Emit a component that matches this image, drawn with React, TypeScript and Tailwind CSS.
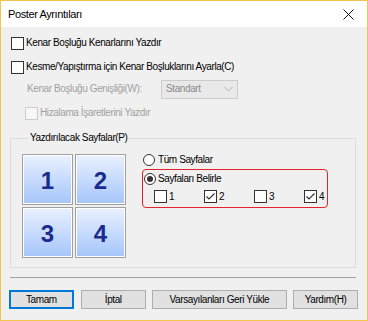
import React from "react";

function Box({ checked = false, disabled = false }: { checked?: boolean; disabled?: boolean }) {
  return (
    <span
      className={`flex h-[13px] w-[13px] shrink-0 items-center justify-center border ${
        disabled ? "border-[#cccccc] bg-[#f7f7f7]" : "border-[#333333] bg-white"
      }`}
    >
      {checked && (
        <svg width="11" height="11" viewBox="0 0 11 11">
          <path d="M1.5 5.5 L4 8 L9.5 2.5" fill="none" stroke="#333" strokeWidth="1.2" />
        </svg>
      )}
    </span>
  );
}

function Radio({ on = false }: { on?: boolean }) {
  return (
    <span className="flex h-[12px] w-[12px] shrink-0 items-center justify-center rounded-full border border-[#333333] bg-white">
      {on && <span className="h-[6px] w-[6px] rounded-full bg-[#333333]" />}
    </span>
  );
}

function Tile({ n }: { n: string }) {
  return (
    <div className="border border-[#a0a0a0] bg-white p-px">
      <div className="flex h-[47px] w-[47px] items-center justify-center bg-gradient-to-b from-[#e8f0ff] to-[#a6c6fa] pt-[2px] text-[24px] font-bold leading-none tracking-normal text-[#1b2a8e] font-['Liberation_Sans',sans-serif]">
        {n}
      </div>
    </div>
  );
}

function Btn({ label, w, focus = false }: { label: string; w: string; focus?: boolean }) {
  return (
    <button
      className={`flex h-[19px] items-center justify-center bg-[#e1e1e1] ${w} ${
        focus ? "border-2 border-[#0078d7]" : "border border-[#adadad]"
      }`}
    >
      {label}
    </button>
  );
}

export default function App() {
  return (
    <div className="flex h-[321px] w-[368px] flex-col border border-[#f2c54b] bg-[#f0f0f0] text-[10px] leading-none tracking-[-0.4px] text-black font-['Liberation_Sans',sans-serif]">
      {/* title bar */}
      <div className="flex h-[26px] shrink-0 items-center justify-between bg-white pl-[7px] pr-[13px]">
        <span className="text-[11px]">Poster Ayrıntıları</span>
        <svg width="11" height="11" viewBox="0 0 11 11">
          <path d="M0.5 0.5 L10.5 10.5 M10.5 0.5 L0.5 10.5" stroke="#111" strokeWidth="1" />
        </svg>
      </div>

      <div className="flex flex-col px-[9px] pt-[4px]">
        <label className="flex h-[24px] items-center gap-[2px] pl-px">
          <Box />
          <span>Kenar Boşluğu Kenarlarını Yazdır</span>
        </label>
        <label className="flex h-[24px] items-center gap-[2px] pl-px">
          <Box />
          <span>Kesme/Yapıştırma için Kenar Boşluklarını Ayarla(C)</span>
        </label>
        <div className="flex h-[20px] items-center whitespace-nowrap pl-[17px] text-[#a0a0a0]">
          <span className="w-[134px]">Kenar Boşluğu Genişliği(W):</span>
          <div className="flex h-[19px] w-[77px] items-center justify-between border border-[#cccccc] bg-[#e9e9e9] pl-[4px] pr-[4px]">
            <span className="text-[#8a8a8a]">Standart</span>
            <svg width="9" height="6" viewBox="0 0 9 6">
              <path d="M0.5 1 L4.5 5 L8.5 1" fill="none" stroke="#b0b0b0" strokeWidth="1" />
            </svg>
          </div>
        </div>
        <label className="flex h-[28px] items-center gap-[2px] pl-[15px] text-[#a0a0a0]">
          <Box disabled />
          <span>Hizalama İşaretlerini Yazdır</span>
        </label>

        <fieldset className="mr-[2px] mt-[4px] border border-[#dcdcdc] pb-[9px] pl-[11px]">
          <legend className="ml-[7px] px-px leading-[14px]">Yazdırılacak Sayfalar(P)</legend>
          <div className="flex pt-[9px]">
            <div className="grid grid-cols-[51px_51px] gap-[2px]">
              <Tile n="1" />
              <Tile n="2" />
              <Tile n="3" />
              <Tile n="4" />
            </div>
            <div className="ml-[16px] flex flex-col">
              <label className="flex h-[12px] items-center gap-[3px] pl-px">
                <Radio />
                <span>Tüm Sayfalar</span>
              </label>
              <div className="mt-[3px] flex h-[39px] w-[186px] flex-col rounded-[4px] border-[1.5px] border-[#e2242a] pt-[3px]">
                <label className="flex h-[12px] items-center gap-[2px] pl-px">
                  <Radio on />
                  <span>Sayfaları Belirle</span>
                </label>
                <div className="mt-[5px] grid grid-cols-[50px_50px_50px_50px] pl-[11px]">
                  {[
                    ["1", false],
                    ["2", true],
                    ["3", false],
                    ["4", true],
                  ].map(([n, c]) => (
                    <label key={n as string} className="flex items-center gap-[2px]">
                      <Box checked={c as boolean} />
                      <span>{n as string}</span>
                    </label>
                  ))}
                </div>
              </div>
            </div>
          </div>
        </fieldset>

        <div className="mr-[2px] mt-[9px] h-px bg-[#a0a0a0]" />

        <div className="-ml-px mt-[12px] flex gap-[6px]">
          <Btn label="Tamam" w="w-[65px]" focus />
          <Btn label="İptal" w="ml-px w-[65px]" />
          <Btn label="Varsayılanları Geri Yükle" w="w-[136px]" />
          <Btn label="Yardım(H)" w="w-[65px]" />
        </div>
      </div>
    </div>
  );
}
